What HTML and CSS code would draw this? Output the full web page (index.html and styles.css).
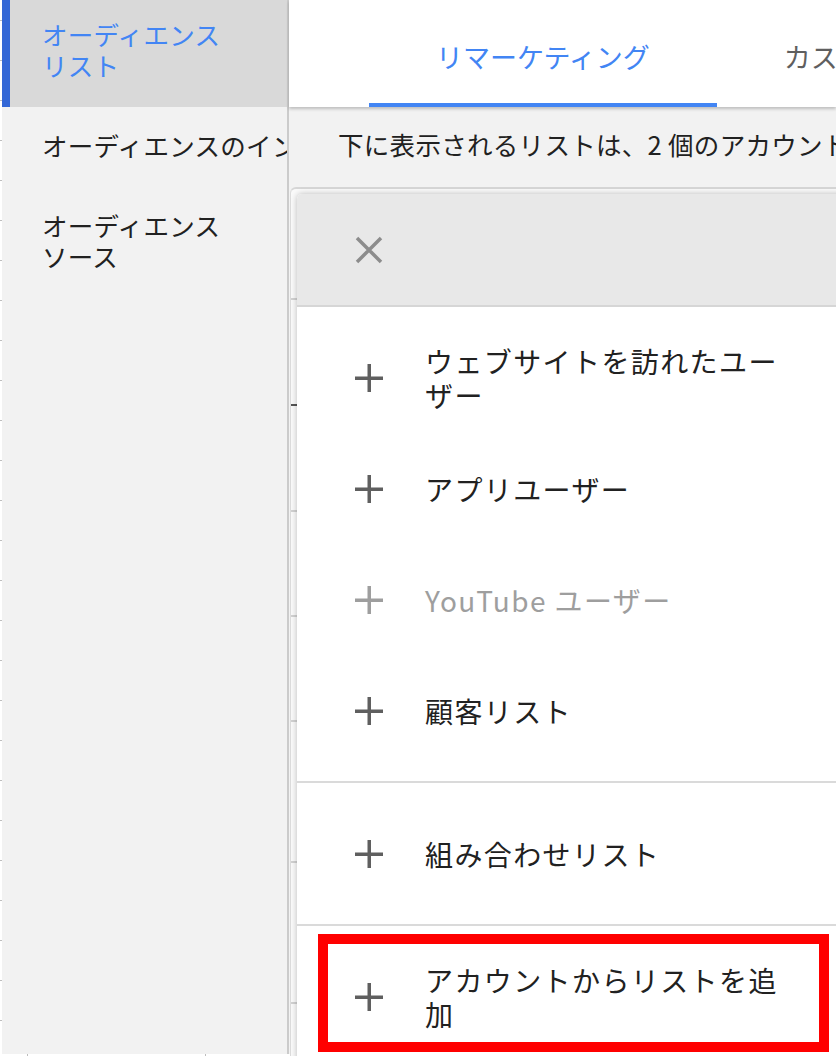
FILE: index.html
```html
<!DOCTYPE html>
<html lang="ja">
<head>
    <meta charset="UTF-8">
    <meta name="viewport" content="width=device-width, initial-scale=1.0">
    <title>オーディエンス マネージャー</title>
    <link rel="stylesheet" href="styles.css">
</head>
<body>
    <div class="screen">
        <div class="frame">
            <div class="edge"></div>

            <div class="sidebar">
                <a href="#" class="side-item active">オーディエンス<br>リスト</a>
                <a href="#" class="side-item">オーディエンスのインサイト</a>
                <a href="#" class="side-item">オーディエンス<br>ソース</a>
            </div>

            <div class="main">
                <div class="tabs">
                    <a href="#" class="tab active">リマーケティング</a>
                    <a href="#" class="tab">カスタム オーディエンス</a>
                </div>

                <div class="notice">下に表示されるリストは、2 個のアカウントで共有されています</div>

                <div class="content">
                    <div class="card">
                        <div class="card-row first"></div>
                        <div class="card-row dark"></div>
                        <div class="card-row"></div>
                        <div class="card-row short"></div>
                        <div class="card-row short"></div>
                        <div class="card-row tall"></div>
                        <div class="card-row tall"></div>
                    </div>

                    <div class="panel">
                        <div class="panel-head">
                            <button class="close" title="閉じる">
                                <svg width="28" height="28" viewBox="0 0 28 28">
                                    <path d="M2 2 L26 26 M26 2 L2 26" stroke="currentColor" stroke-width="3.5" fill="none"/>
                                </svg>
                            </button>
                        </div>

                        <div class="group">
                            <div class="add-item">
                                <span class="plus"><svg width="28" height="28" viewBox="0 0 28 28"><rect x="12.5" y="0" width="3.5" height="28" fill="currentColor"/><rect x="0" y="12.5" width="28" height="3.5" fill="currentColor"/></svg></span>
                                <span class="label">ウェブサイトを訪れたユーザー</span>
                            </div>
                            <div class="add-item">
                                <span class="plus"><svg width="28" height="28" viewBox="0 0 28 28"><rect x="12.5" y="0" width="3.5" height="28" fill="currentColor"/><rect x="0" y="12.5" width="28" height="3.5" fill="currentColor"/></svg></span>
                                <span class="label">アプリユーザー</span>
                            </div>
                            <div class="add-item disabled">
                                <span class="plus"><svg width="28" height="28" viewBox="0 0 28 28"><rect x="12.5" y="0" width="3.5" height="28" fill="currentColor"/><rect x="0" y="12.5" width="28" height="3.5" fill="currentColor"/></svg></span>
                                <span class="label">YouTube ユーザー</span>
                            </div>
                            <div class="add-item">
                                <span class="plus"><svg width="28" height="28" viewBox="0 0 28 28"><rect x="12.5" y="0" width="3.5" height="28" fill="currentColor"/><rect x="0" y="12.5" width="28" height="3.5" fill="currentColor"/></svg></span>
                                <span class="label">顧客リスト</span>
                            </div>
                        </div>

                        <div class="group">
                            <div class="add-item">
                                <span class="plus"><svg width="28" height="28" viewBox="0 0 28 28"><rect x="12.5" y="0" width="3.5" height="28" fill="currentColor"/><rect x="0" y="12.5" width="28" height="3.5" fill="currentColor"/></svg></span>
                                <span class="label">組み合わせリスト</span>
                            </div>
                        </div>

                        <div class="group">
                            <div class="add-item highlighted">
                                <span class="plus"><svg width="28" height="28" viewBox="0 0 28 28"><rect x="12.5" y="0" width="3.5" height="28" fill="currentColor"/><rect x="0" y="12.5" width="28" height="3.5" fill="currentColor"/></svg></span>
                                <span class="label">アカウントからリストを追加</span>
                                <span class="mark"></span>
                            </div>
                        </div>
                    </div>
                </div>
            </div>
        </div>
        <div class="bottom-edge"></div>
    </div>
</body>
</html>
```

FILE: styles.css
```css
body {
    margin: 0;
    padding: 0;
    background-color: #fff;
    font-family: "Noto Sans CJK JP", "Noto Sans", sans-serif;
    color: #212121;
}
a {
    color: inherit;
    text-decoration: none;
}
.screen {
    width: 836px;
    height: 1056px;
    overflow: hidden;
}
.frame {
    display: flex;
    height: 1054px;
}
.edge {
    width: 2px;
    flex-shrink: 0;
    background-color: #fff;
    background-image: repeating-linear-gradient(to bottom, transparent 0, transparent 20px, #bdbdbd 20px, #bdbdbd 21px, transparent 21px, transparent 40px);
}
.bottom-edge {
    height: 2px;
    background-color: #fff;
    background-image: repeating-linear-gradient(to right, transparent 0, transparent 27px, #bdbdbd 27px, #bdbdbd 28px, transparent 28px, transparent 178px);
}

/* left navigation */
.sidebar {
    width: 285px;
    flex-shrink: 0;
    background-color: #f2f2f2;
    border-right: 2px solid #cbcbcb;
    overflow: hidden;
}
.side-item {
    display: block;
    padding: 22px 0 27px 40px;
    font-size: 25.5px;
    line-height: 31px;
    letter-spacing: 0.3px;
    white-space: nowrap;
}
.side-item.active {
    padding-top: 18px;
    height: 62px;
    background-color: #d9d9d9;
    box-shadow: inset 8px 0 0 #3367d6;
    color: #4285f4;
}

/* main column */
.main {
    flex: 1;
    display: flex;
    flex-direction: column;
    min-width: 0;
    background-color: #f2f2f2;
}
.tabs {
    display: flex;
    height: 107px;
    padding-left: 80px;
    background-color: #fff;
    box-shadow: 0 2px 3px rgba(0, 0, 0, 0.22);
    position: relative;
    z-index: 2;
    white-space: nowrap;
}
.tab {
    box-sizing: border-box;
    height: 107px;
    padding: 40px 67px 0;
    font-size: 27px;
    line-height: 34px;
    color: #5f5f5f;
}
.tab.active {
    color: #4285f4;
    border-bottom: 4px solid #4285f4;
}
.notice {
    box-sizing: border-box;
    height: 80px;
    padding: 20px 0 0 49px;
    font-size: 25.5px;
    line-height: 34px;
    letter-spacing: 0.3px;
    white-space: nowrap;
    overflow: hidden;
}

.content {
    flex: 1;
    position: relative;
}
.card {
    height: 100%;
    margin-left: 1px;
    background-color: #fafafa;
    border-top: 2px solid #d6d6d6;
    border-left: 1px solid #dcdcdc;
    border-top-left-radius: 6px;
}
.card-row {
    height: 104px;
    border-bottom: 2px solid #d2d2d2;
}
.card-row.first {
    height: 109px;
}
.card-row.dark {
    border-bottom-color: #555;
}
.card-row.short {
    height: 103px;
}
.card-row.tall {
    height: 139px;
}

/* add list panel */
.panel {
    position: absolute;
    left: 8px;
    top: 7px;
    right: -40px;
    bottom: -40px;
    background-color: #fff;
    border-top-left-radius: 5px;
    box-shadow: 0 0 6px rgba(0, 0, 0, 0.25);
    z-index: 3;
}
.panel-head {
    display: flex;
    align-items: center;
    height: 111px;
    padding-left: 58px;
    background-color: #e8e8e8;
    border-bottom: 2px solid #d6d6d6;
    border-top-left-radius: 5px;
}
.close {
    display: flex;
    padding: 0;
    border: none;
    background: none;
    color: #8c8c8c;
    cursor: pointer;
}
.group {
    padding: 15px 0;
    border-bottom: 2px solid #dadada;
}
.add-item {
    display: flex;
    align-items: center;
    min-height: 111px;
    padding-left: 58px;
    position: relative;
    cursor: pointer;
}
.plus {
    display: flex;
    width: 28px;
    color: #5f5f5f;
}
.label {
    max-width: 362px;
    margin-left: 42px;
    font-size: 28px;
    line-height: 34px;
    letter-spacing: 1.4px;
}
.add-item.disabled .plus,
.add-item.disabled .label {
    color: #9e9e9e;
}
.mark {
    position: absolute;
    left: 21px;
    top: -7px;
    bottom: 0;
    width: 511px;
    box-sizing: border-box;
    border: 10px solid #ff0000;
}
```
